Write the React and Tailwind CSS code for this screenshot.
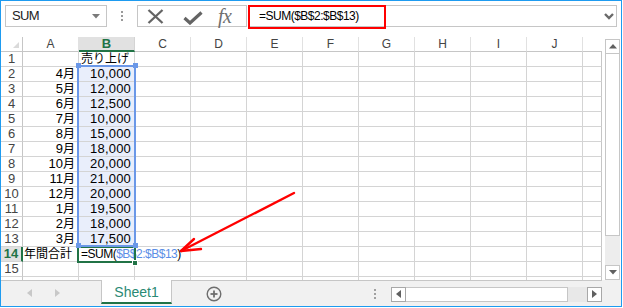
import React from "react";

const FONT = "font-['Liberation_Sans','Noto_Sans_CJK_JP',sans-serif]";
const COLS = ["A", "B", "C", "D", "E", "F", "G", "H", "I", "J"];

const DATA = [
  ["4月", "10,000"],
  ["5月", "12,000"],
  ["6月", "12,500"],
  ["7月", "10,000"],
  ["8月", "15,000"],
  ["9月", "18,000"],
  ["10月", "20,000"],
  ["11月", "21,000"],
  ["12月", "20,000"],
  ["1月", "19,500"],
  ["2月", "18,000"],
  ["3月", "17,500"],
];

function Month({ m }) {
  const num = m.slice(0, -1);
  return (
    <span className="whitespace-nowrap">
      <span className="text-[13px]">{num}</span>
      <span className="text-[12px]">月</span>
    </span>
  );
}

function Row({ n, a, b, active }) {
  return (
    <div className="flex h-[15px] shrink-0">
      <div
        className={
          active
            ? "w-[22px] shrink-0 border-b border-b-[#d4d4d4] border-r-2 border-r-[#217346] bg-[#e1e1e1] text-[13px] leading-[14px] font-bold text-[#217346] text-center"
            : "w-[22px] shrink-0 border-b border-r border-b-[#d4d4d4] border-r-[#c6c6c6] bg-white text-[13px] leading-[14px] text-[#444] text-center"
        }
      >
        {n}
      </div>
      {COLS.map((c) => {
        let content = null;
        let cls =
          "w-[56px] shrink-0 border-r border-b border-[#d4d4d4] text-[13px] leading-[14px] text-black whitespace-nowrap";
        if (c === "A" && a) {
          content = a;
        }
        if (c === "B") {
          if (n >= 2 && n <= 13) cls += " bg-[#e9eefb]";
          content = b;
        }
        return (
          <div key={c} className={cls}>
            {content}
          </div>
        );
      })}
      <div className="w-[19px] shrink-0 border-r border-b border-b-[#d4d4d4] border-r-[#c6c6c6]" />
    </div>
  );
}

export default function App() {
  const rows = [];
  rows.push(
    <Row
      key={1}
      n={1}
      a={null}
      b={
        <div className="pl-[2px] text-[12px] leading-[14px]">売り上げ</div>
      }
    />
  );
  DATA.forEach(([m, v], i) => {
    rows.push(
      <Row
        key={i + 2}
        n={i + 2}
        a={
          <div className="text-right pr-[3px]">
            <Month m={m} />
          </div>
        }
        b={<div className="text-right pr-[3px] tracking-[0.2px]">{v}</div>}
      />
    );
  });
  rows.push(
    <Row
      key={14}
      n={14}
      active
      a={<div className="pl-[1px] text-[12px] leading-[14px]">年間合計</div>}
      b={
        <div className="pl-[2px] text-[12px] leading-[14px] tracking-[-0.5px] flex items-center">
          <span>=SUM(</span>
          <span className="text-[#5b8ee6]">$B$2:$B$13</span>
          <span>)</span>
          <span className="inline-block w-px h-[11px] bg-black ml-[1px]" />
        </div>
      }
    />
  );
  rows.push(<Row key={15} n={15} a={null} b={null} />);
  rows.push(<Row key={16} n="" a={null} b={null} />);

  return (
    <div className={`relative w-[623px] h-[308px] bg-white ${FONT}`}>
      <div className="w-[622px] h-[307px] border border-[#1e9bf0] flex flex-col bg-white overflow-hidden">
        {/* Toolbar */}
        <div className="h-[36px] shrink-0 pt-[4px] flex items-start">
          <div className="ml-[4px] w-[102px] h-[22px] border border-[#c6c6c6] flex items-center justify-between pl-[6px] pr-[6px]">
            <span className="text-[13px] text-[#222] tracking-[-0.6px]">SUM</span>
            <svg width="8" height="5" viewBox="0 0 8 5">
              <polygon points="0,0 8,0 4,4.5" fill="#7a7a7a" />
            </svg>
          </div>
          <div className="w-[30px] h-[22px] flex flex-col items-center justify-center gap-[2px]">
            <div className="w-[2px] h-[2px] bg-[#9a9a9a]" />
            <div className="w-[2px] h-[2px] bg-[#9a9a9a]" />
            <div className="w-[2px] h-[2px] bg-[#9a9a9a]" />
          </div>
          <div className="w-[110px] h-[22px] border border-[#c6c6c6] flex items-center">
            <svg className="ml-[9px]" width="17" height="15" viewBox="0 0 17 15">
              <line x1="1.5" y1="1" x2="15.5" y2="14" stroke="#646464" strokeWidth="2.3" />
              <line x1="15.5" y1="1" x2="1.5" y2="14" stroke="#646464" strokeWidth="2.3" />
            </svg>
            <svg className="ml-[19px] mt-[3px]" width="20" height="14" viewBox="0 0 20 14">
              <polyline
                points="1.5,7 7,12 18.5,1.5"
                fill="none"
                stroke="#646464"
                strokeWidth="3.2"
              />
            </svg>
            <span className="ml-[15px] font-['Liberation_Serif',serif] italic text-[20px] leading-[20px] text-[#707070] tracking-[-0.5px]">
              fx
            </span>
          </div>
          <div className="relative ml-px w-[369px] h-[22px] border border-[#c6c6c6] flex items-center">
            <div className="absolute -left-px -top-px w-[138px] h-[24px] border-2 border-[#ff0000]" />
            <span className="pl-[10px] text-[12px] tracking-[-0.5px] text-black">
              =SUM($B$2:$B$13)
            </span>
            <svg className="ml-auto mr-[2px]" width="10" height="7" viewBox="0 0 10 7">
              <polyline points="1,1 5,5 9,1" fill="none" stroke="#6a6a6a" strokeWidth="2.4" />
            </svg>
          </div>
        </div>

        {/* Grid area */}
        <div className="h-[243px] shrink-0 flex">
          <div className="relative w-[601px] h-[243px] overflow-hidden shrink-0">
            {/* Header row */}
            <div className="flex h-[15px]">
              <div className="w-[22px] shrink-0 border-r border-b border-[#c6c6c6] relative">
                <svg className="absolute right-[3px] bottom-[3px]" width="6" height="6" viewBox="0 0 6 6">
                  <polygon points="6,0 6,6 0,6" fill="#dadada" />
                </svg>
              </div>
              {COLS.map((c) =>
                c === "B" ? (
                  <div
                    key={c}
                    className="w-[56px] shrink-0 border-r border-r-[#d4d4d4] border-b-2 border-b-[#217346] bg-[#e1e1e1] text-center text-[13px] leading-[13px] font-bold text-[#217346]"
                  >
                    {c}
                  </div>
                ) : (
                  <div
                    key={c}
                    className="w-[56px] shrink-0 border-r border-r-[#e1e1e1] border-b border-b-[#c6c6c6] text-center text-[12px] leading-[14px] text-[#444]"
                  >
                    {c}
                  </div>
                )
              )}
              <div className="w-[19px] shrink-0 border-b border-[#c6c6c6]" />
            </div>
            {rows}

            {/* Active cell */}
            <div className="absolute left-[76px] top-[209px] w-[59px] h-[17px] border-2 border-[#217346]" />
            <div className="absolute left-[131px] top-[223px] w-[6px] h-[6px] bg-[#217346] border border-white" />
            {/* Range selection */}
            <div className="absolute left-[76px] top-[28px] w-[59px] h-[182px] border-2 border-[#6b98e8]" />
            <div className="absolute left-[75px] top-[26px] w-[5px] h-[5px] bg-[#6b98e8]" />
            <div className="absolute left-[132px] top-[26px] w-[5px] h-[5px] bg-[#6b98e8]" />
            <div className="absolute left-[75px] top-[206px] w-[5px] h-[5px] bg-[#6b98e8]" />
            <div className="absolute left-[132px] top-[206px] w-[5px] h-[5px] bg-[#6b98e8]" />
          </div>
          {/* Vertical scrollbar */}
          <div className="ml-[3px] w-[15px] h-[243px] flex flex-col pt-[2px] shrink-0">
            <div className="h-[15px] border border-[#c6c6c6] bg-white flex items-center justify-center">
              <svg width="8" height="5" viewBox="0 0 8 5">
                <polygon points="0,4.5 8,4.5 4,0" fill="#606060" />
              </svg>
            </div>
            <div className="h-[182px] border-x border-b border-[#c6c6c6] bg-white" />
            <div className="flex-1 bg-[#ededed]" />
            <div className="h-[15px] border border-[#c6c6c6] bg-white flex items-center justify-center">
              <svg width="8" height="5" viewBox="0 0 8 5">
                <polygon points="0,0 8,0 4,4.5" fill="#606060" />
              </svg>
            </div>
          </div>
        </div>

        {/* Sheet tab bar */}
        <div className="h-[26px] shrink-0 bg-[#f1f1f1] flex items-start">
          <div className="w-[100px] h-[25px] border-t border-[#c6c6c6] flex items-center">
            <svg className="ml-[26px]" width="5" height="8" viewBox="0 0 5 8">
              <polygon points="5,0 5,8 0,4" fill="#c8c8c8" />
            </svg>
            <svg className="ml-[23px]" width="5" height="8" viewBox="0 0 5 8">
              <polygon points="0,0 0,8 5,4" fill="#c8c8c8" />
            </svg>
          </div>
          <div className="w-[71px] h-[24px] bg-white border-x border-[#c6c6c6] border-b-2 border-b-[#217346] flex items-center justify-center">
            <span className="text-[14px] text-[#2a8a74] leading-[14px] mt-[2px]">Sheet1</span>
          </div>
          <div className="w-[430px] h-[25px] border-t border-[#c6c6c6] flex items-center">
            <svg className="ml-[34px] mt-[2px]" width="16" height="16" viewBox="0 0 16 16">
              <circle cx="8" cy="8" r="6.8" fill="none" stroke="#6e6e6e" strokeWidth="1.4" />
              <line x1="4.5" y1="8" x2="11.5" y2="8" stroke="#6e6e6e" strokeWidth="1.8" />
              <line x1="8" y1="4.5" x2="8" y2="11.5" stroke="#6e6e6e" strokeWidth="1.8" />
            </svg>
            <div className="ml-[152px] flex flex-col gap-[2px] mt-[1px]">
              <div className="w-[2px] h-[2px] bg-[#a0a0a0]" />
              <div className="w-[2px] h-[2px] bg-[#a0a0a0]" />
              <div className="w-[2px] h-[2px] bg-[#a0a0a0]" />
            </div>
            <div className="ml-[15px] mt-[2px] w-[211px] h-[15px] flex">
              <div className="w-[15px] h-[15px] border border-[#a8a8a8] bg-white flex items-center justify-center">
                <svg width="5" height="8" viewBox="0 0 5 8">
                  <polygon points="5,0 5,8 0,4" fill="#606060" />
                </svg>
              </div>
              <div className="w-[162px] h-[15px] border-y border-r border-[#c6c6c6] bg-white" />
              <div className="w-[19px] h-[15px] bg-[#e8e8e8]" />
              <div className="w-[15px] h-[15px] border border-[#a8a8a8] bg-white flex items-center justify-center">
                <svg width="5" height="8" viewBox="0 0 5 8">
                  <polygon points="0,0 0,8 5,4" fill="#606060" />
                </svg>
              </div>
            </div>
          </div>
          <div className="flex-1 h-[25px]" />
        </div>
      </div>

      {/* Red annotation arrow */}
      <svg
        className="absolute left-0 top-0 pointer-events-none"
        width="623"
        height="308"
        viewBox="0 0 623 308"
      >
        <g stroke="#ff0000" strokeWidth="2.4" strokeLinecap="round" fill="none">
          <line x1="294" y1="193" x2="181" y2="251" />
          <line x1="181" y1="251" x2="194" y2="239" />
          <line x1="181" y1="251" x2="201" y2="249" />
        </g>
      </svg>
    </div>
  );
}
